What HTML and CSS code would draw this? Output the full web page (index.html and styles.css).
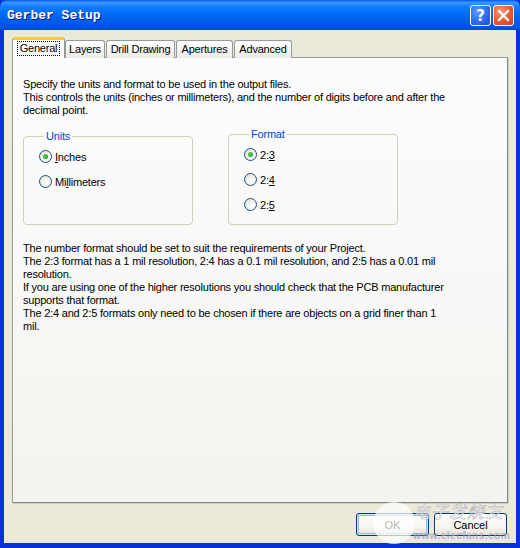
FILE: index.html
```html
<!DOCTYPE html>
<html>
<head>
<meta charset="utf-8">
<link rel="stylesheet" href="styles.css">
</head>
<body>
<div class="window">
  <div class="titlebar">
    <span class="title">Gerber Setup</span>
    <div class="tb-buttons">
      <span class="tb-btn help">?</span>
      <span class="tb-btn close">
        <svg width="13" height="13" viewBox="0 0 13 13"><path d="M2 2 L11 11 M11 2 L2 11" stroke="#fff" stroke-width="2.2" stroke-linecap="square"/></svg>
      </span>
    </div>
  </div>
  <div class="client">
    <div class="tabs">
      <div class="tab selected w-general"><span class="focus">General</span></div>
      <div class="tab w-layers">Layers</div>
      <div class="tab w-drill">Drill Drawing</div>
      <div class="tab w-apert">Apertures</div>
      <div class="tab w-adv">Advanced</div>
    </div>
    <div class="panel">
      <p class="para">Specify the units and format to be used in the output files.<br>This controls the units (inches or millimeters), and the number of digits before and after the decimal point.</p>
      <div class="groups">
        <fieldset class="group">
          <legend>Units</legend>
          <div class="group-body">
            <div class="radio-row"><span class="radio checked"></span><span><u>I</u>nches</span></div>
            <div class="radio-row"><span class="radio"></span><span>Mi<u>l</u>limeters</span></div>
          </div>
        </fieldset>
        <fieldset class="group format">
          <legend>Format</legend>
          <div class="group-body">
            <div class="radio-row"><span class="radio checked"></span><span>2:<u>3</u></span></div>
            <div class="radio-row"><span class="radio"></span><span>2:<u>4</u></span></div>
            <div class="radio-row"><span class="radio"></span><span>2:<u>5</u></span></div>
          </div>
        </fieldset>
      </div>
      <p class="para notes">The number format should be set to suit the requirements of your Project.<br>The 2:3 format has a 1 mil resolution, 2:4 has a 0.1 mil resolution, and 2:5 has a 0.01 mil resolution.<br>If you are using one of the higher resolutions you should check that the PCB manufacturer supports that format.<br>The 2:4 and 2:5 formats only need to be chosen if there are objects on a grid finer than 1 mil.</p>
    </div>
    <div class="buttons">
      <button class="btn default">OK</button>
      <button class="btn">Cancel</button>
    </div>
    <div class="watermark">
      <span class="wm-circle"></span>
      <span class="wm-cn">电子发烧友</span>
      <span class="wm-url">www.elecfans.com</span>
    </div>
  </div>
</div>
</body>
</html>
```

FILE: styles.css
```css
html, body {
  margin: 0;
  padding: 0;
  background: #ECE9D8;
}
.window {
  width: 520px;
  height: 548px;
  display: flex;
  flex-direction: column;
  background: #0831D9;
  overflow: hidden;
  font-family: "Liberation Sans", Arial, sans-serif;
  font-size: 11px;
  letter-spacing: -0.2px;
  color: #000;
}
.titlebar {
  height: 30px;
  flex: none;
  display: flex;
  align-items: center;
  justify-content: space-between;
  padding: 0 6px 0 7px;
  background: linear-gradient(to bottom, #0058EE 0%, #3A93FF 8%, #288EFF 14%, #127DFF 22%, #036FFC 40%, #0262EE 60%, #0057E5 80%, #0054E3 92%, #0049C9 100%);
  border-radius: 7px 7px 0 0;
}
.title {
  font-family: "Liberation Mono", "DejaVu Sans Mono", monospace;
  font-weight: bold;
  font-size: 13px;
  letter-spacing: 0;
  color: #fff;
  text-shadow: 1px 1px 0 #0A1883;
  margin-top: 1px;
}
.tb-buttons {
  display: flex;
  gap: 2px;
  margin-top: 1px;
}
.tb-btn {
  width: 21px;
  height: 21px;
  box-sizing: border-box;
  border: 1px solid #fff;
  border-radius: 3px;
  display: flex;
  align-items: center;
  justify-content: center;
  color: #fff;
  letter-spacing: 0;
}
.help {
  background: radial-gradient(circle at 35% 30%, #5B9BFF 0%, #2A6BF0 55%, #1451D8 100%);
  font-family: "DejaVu Sans", sans-serif;
  font-weight: bold;
  font-size: 15px;
}
.close {
  background: radial-gradient(circle at 35% 30%, #F29A7E 0%, #E35A33 55%, #C7401A 100%);
}
.client {
  flex: 1;
  margin: 0 4px 5px 4px;
  background: #ECE9D8;
  padding: 7px 9px 0 8px;
  display: flex;
  flex-direction: column;
  position: relative;
}
.tabs {
  display: flex;
  align-items: flex-end;
  height: 21px;
  gap: 1px;
  position: relative;
  z-index: 1;
  margin-bottom: -1px;
}
.tab {
  height: 18px;
  box-sizing: border-box;
  border: 1px solid #919B9C;
  border-bottom: none;
  border-radius: 3px 3px 0 0;
  background: linear-gradient(to bottom, #FFFFFF 0%, #F6F5F1 50%, #ECEBE5 100%);
  display: flex;
  align-items: center;
  justify-content: center;
  padding-bottom: 1px;
}
.tab.selected {
  height: 21px;
  background: #FCFCFE;
  border-top: 3px solid #FFC83C;
  margin-right: -1px;
  padding-bottom: 2px;
}
.focus {
  outline: 1px dotted #000;
  outline-offset: 0;
  padding: 0 2px;
  line-height: 13px;
}
.w-general { width: 53px; }
.w-layers { width: 40px; }
.w-drill { width: 69px; }
.w-apert { width: 57px; }
.w-adv { width: 58px; }
.panel {
  width: 496px;
  height: 446px;
  box-sizing: border-box;
  border: 1px solid #919B9C;
  border-right-color: #7F8A8B;
  border-bottom-color: #7F8A8B;
  background: linear-gradient(to bottom, #FCFCFE 0%, #F7F7F5 60%, #F4F3EE 100%);
  padding: 20px 54px 0 10px;
  box-shadow: 1px 1px 0 #D0CEBF;
}
.para {
  margin: 0;
  line-height: 13px;
}
.groups {
  display: flex;
  gap: 35px;
  margin-top: 13px;
}
.group {
  margin: 0;
  width: 170px;
  box-sizing: border-box;
  border: 1px solid #D0D0BF;
  border-radius: 4px;
  padding: 0 0 0 15px;
  min-inline-size: 0;
}
.group.format {
  margin-top: -2px;
}
.group legend {
  color: #0046D5;
  padding: 0 2px;
  margin-left: 5px;
  line-height: 13px;
}
.group-body {
  height: 80px;
  padding-top: 1px;
}
.radio-row {
  height: 25px;
  display: flex;
  align-items: center;
  gap: 3px;
}
.radio {
  width: 13px;
  height: 13px;
  box-sizing: border-box;
  border-radius: 50%;
  border: 1px solid #1C5180;
  background: radial-gradient(circle at 70% 70%, #FFFFFF 0%, #F0F0EA 50%, #D8D8CF 100%);
  display: flex;
  align-items: center;
  justify-content: center;
}
.radio.checked::after {
  content: "";
  width: 5px;
  height: 5px;
  border-radius: 50%;
  background: radial-gradient(circle at 40% 40%, #5EDB5E 0%, #21A121 70%, #1A8A1A 100%);
}
.notes {
  margin-top: 17px;
}
.buttons {
  display: flex;
  justify-content: flex-end;
  gap: 5px;
  margin-top: 10px;
}
.btn {
  width: 73px;
  height: 23px;
  box-sizing: border-box;
  border: 1px solid #003C74;
  border-radius: 3px;
  background: linear-gradient(to bottom, #FFFFFF 0%, #F5F4F0 60%, #E6E3D6 100%);
  font-family: "Liberation Sans", Arial, sans-serif;
  font-size: 11px;
  color: #000;
  padding: 0;
}
.btn.default {
  box-shadow: inset 0 0 0 1px #CEE7FF, inset 0 0 0 2px #98B8EA;
}
.watermark {
  position: absolute;
  left: 347px;
  top: 466px;
  width: 170px;
  height: 52px;
  pointer-events: none;
  letter-spacing: 0;
}
.wm-circle {
  position: absolute;
  left: 22px;
  top: 6px;
  width: 42px;
  height: 42px;
  border-radius: 50%;
  background: rgba(255, 255, 255, 0.7);
}
.wm-cn {
  position: absolute;
  left: 62px;
  top: 2px;
  font-family: "Noto Sans CJK SC", sans-serif;
  font-size: 17px;
  font-style: italic;
  color: rgba(255, 255, 255, 0.85);
  -webkit-text-stroke: 0.5px rgba(120, 120, 140, 0.6);
  letter-spacing: 1px;
}
.wm-url {
  position: absolute;
  left: 62px;
  top: 34px;
  font-family: "Liberation Sans", Arial, sans-serif;
  font-size: 10px;
  font-weight: bold;
  color: rgba(150, 160, 180, 0.7);
  letter-spacing: 0.5px;
}
```
